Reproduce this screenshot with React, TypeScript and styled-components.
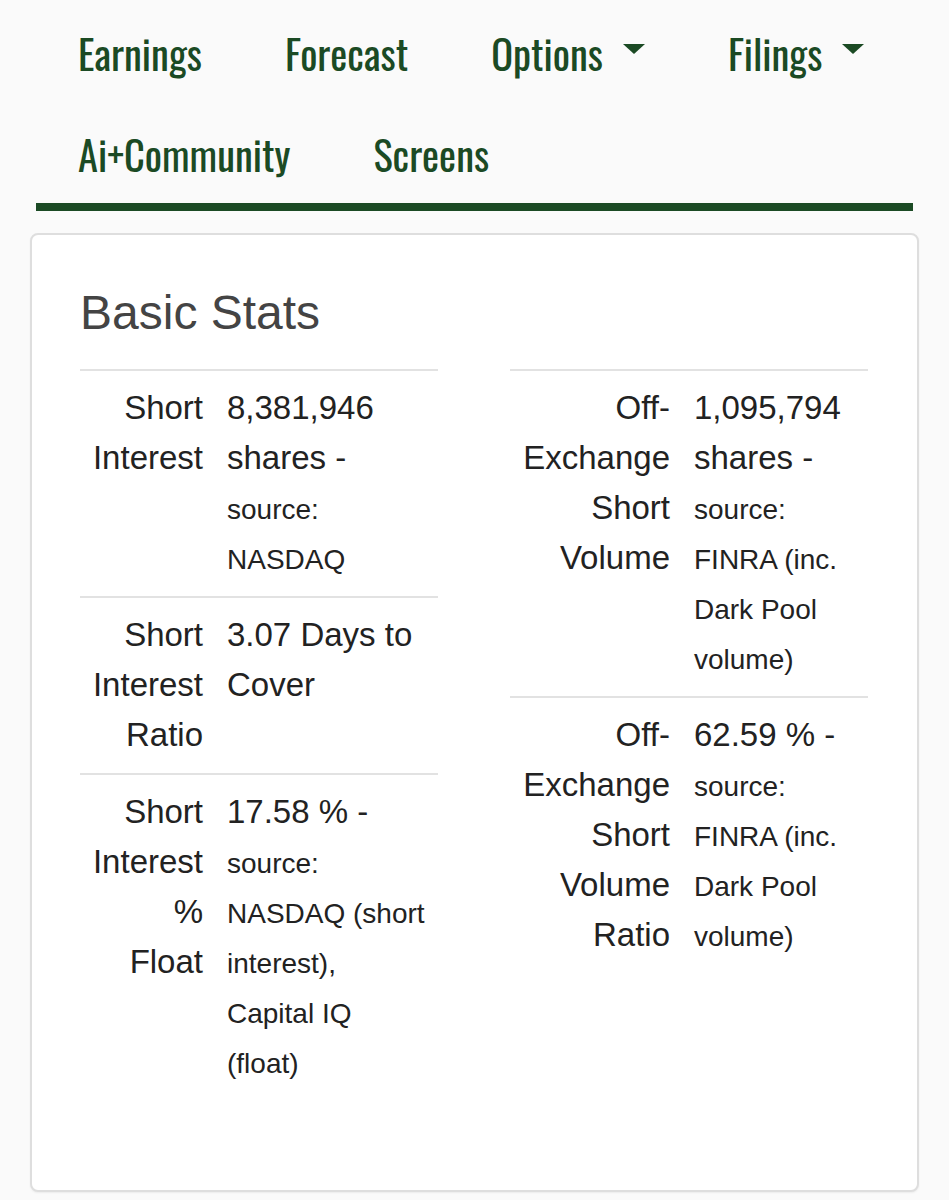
import React from "react";
import styled, { createGlobalStyle } from "styled-components";

const GREEN = "#1b4a24";

const GlobalStyle = createGlobalStyle`
  html, body {
    margin: 0;
    padding: 0;
    background: #fafafa;
  }
  body {
    font-family: "Liberation Sans", Arial, sans-serif;
    color: #222;
  }
`;

const Page = styled.div`
  width: 949px;
  min-height: 1200px;
  box-sizing: border-box;
  padding: 0 30px;
`;

const NavBar = styled.nav`
  margin: 0 6px;
  display: flex;
  flex-wrap: wrap;
  border-bottom: 8px solid ${GREEN};
`;

const NavBreak = styled.div`
  flex-basis: 100%;
  height: 0;
`;

const NavItem = styled.a`
  display: flex;
  align-items: center;
  height: 101.5px;
  padding: 4px 41px 0 42px;
  box-sizing: border-box;
  color: ${GREEN};
  text-decoration: none;
  white-space: nowrap;
`;

const NavText = styled.span`
  font-family: "Oswald", "DejaVu Sans Condensed", sans-serif;
  font-size: 40.5px;
`;

const Caret = styled.span`
  display: inline-block;
  width: 0;
  height: 0;
  margin-left: 20px;
  margin-top: -8px;
  border-left: 11.5px solid transparent;
  border-right: 11.5px solid transparent;
  border-top: 10px solid ${GREEN};
`;

const Card = styled.section`
  margin-top: 22px;
  height: 959px;
  box-sizing: border-box;
  background: #fff;
  border: 2px solid #dedede;
  border-radius: 8px;
  box-shadow: 0 1px 2px rgba(0, 0, 0, 0.06);
  padding: 48px 48px 0;
`;

const Title = styled.h2`
  margin: 0 0 26px;
  font-size: 48px;
  font-weight: 400;
  line-height: 60px;
  color: #444;
`;

const Columns = styled.div`
  display: grid;
  grid-template-columns: 358px 358px;
  column-gap: 72px;
  align-items: start;
`;

const StatTable = styled.div<{ labelWidth: number }>`
  display: grid;
  grid-template-columns: ${({ labelWidth }) => labelWidth}px 1fr;
`;

const Label = styled.div`
  border-top: 2px solid #e2e2e2;
  padding: 12px 12px 13px;
  text-align: right;
  font-size: 33px;
  line-height: 50px;
  color: #222;
`;

const Value = styled.div`
  border-top: 2px solid #e2e2e2;
  padding: 12px 12px 13px;
  font-size: 33px;
  line-height: 50px;
  color: #222;
`;

const Small = styled.small`
  font-size: 28px;
  line-height: 1;
`;

type Stat = { label: string; main: string; source: string };

const left: Stat[] = [
  {
    label: "Short Interest",
    main: "8,381,946 shares - ",
    source: "source: NASDAQ",
  },
  { label: "Short Interest Ratio", main: "3.07 Days to Cover", source: "" },
  {
    label: "Short Interest % Float",
    main: "17.58 % - ",
    source: "source: NASDAQ (short interest), Capital IQ (float)",
  },
];

const right: Stat[] = [
  {
    label: "Off-Exchange Short Volume",
    main: "1,095,794 shares - ",
    source: "source: FINRA (inc. Dark Pool volume)",
  },
  {
    label: "Off-Exchange Short Volume Ratio",
    main: "62.59 % - ",
    source: "source: FINRA (inc. Dark Pool volume)",
  },
];

const Table: React.FC<{ rows: Stat[]; labelWidth: number }> = ({
  rows,
  labelWidth,
}) => (
  <StatTable labelWidth={labelWidth}>
    {rows.map((r) => (
      <React.Fragment key={r.label}>
        <Label>{r.label}</Label>
        <Value>
          {r.main}
          {r.source && <Small>{r.source}</Small>}
        </Value>
      </React.Fragment>
    ))}
  </StatTable>
);

export default function App() {
  return (
    <>
      <GlobalStyle />
      <Page>
        <NavBar>
          <NavItem>
            <NavText>Earnings</NavText>
          </NavItem>
          <NavItem>
            <NavText>Forecast</NavText>
          </NavItem>
          <NavItem>
            <NavText>Options</NavText>
            <Caret />
          </NavItem>
          <NavItem>
            <NavText>Filings</NavText>
            <Caret />
          </NavItem>
          <NavBreak />
          <NavItem>
            <NavText>Ai+Community</NavText>
          </NavItem>
          <NavItem>
            <NavText>Screens</NavText>
          </NavItem>
        </NavBar>
        <Card>
          <Title>Basic Stats</Title>
          <Columns>
            <Table rows={left} labelWidth={135} />
            <Table rows={right} labelWidth={172} />
          </Columns>
        </Card>
      </Page>
    </>
  );
}
